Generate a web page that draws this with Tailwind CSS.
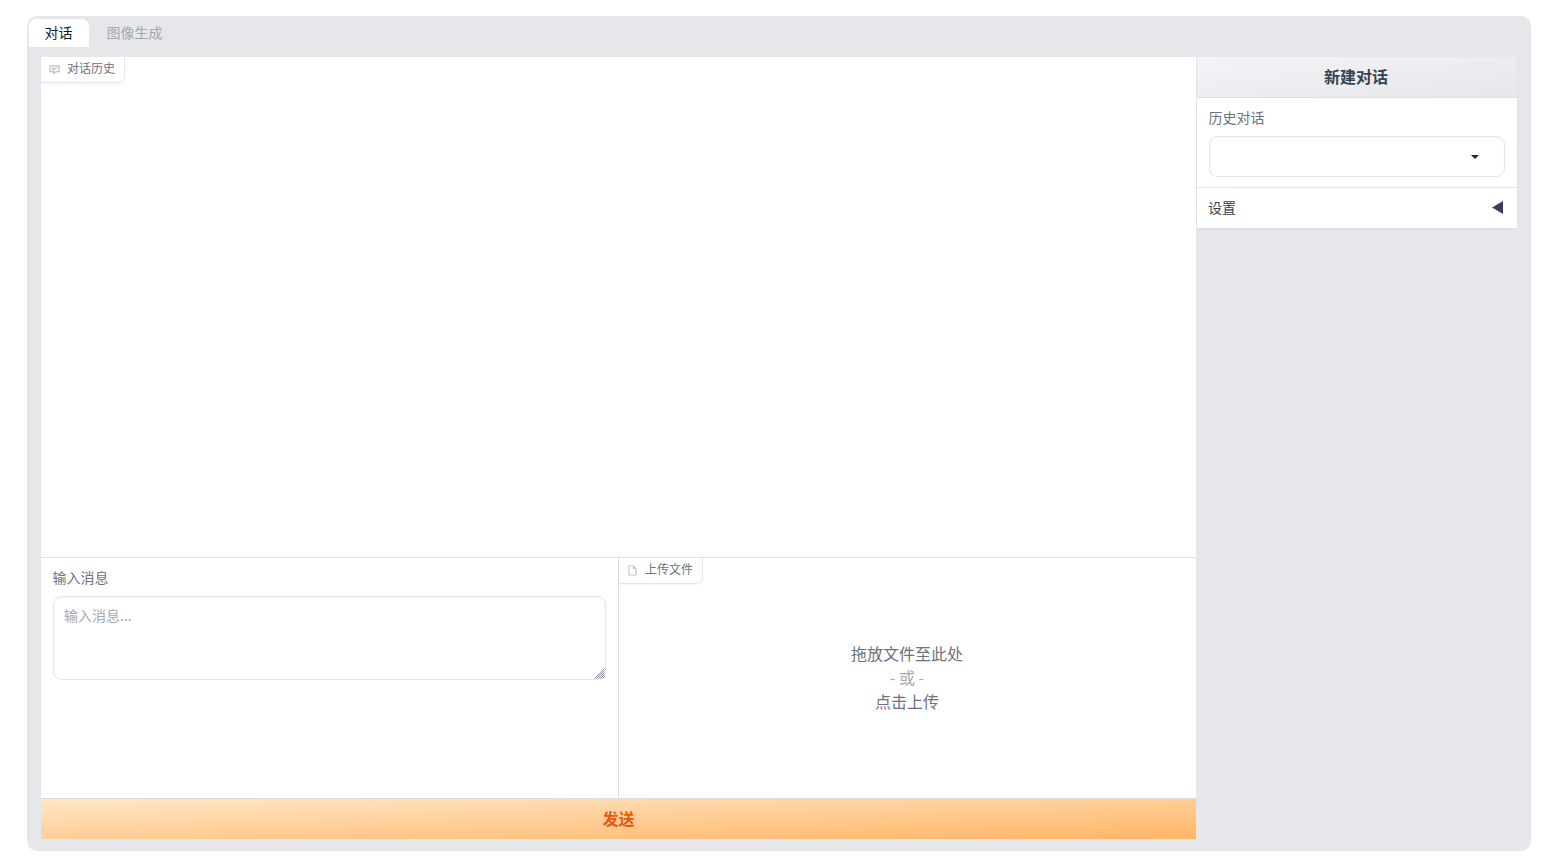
<!DOCTYPE html>
<html lang="zh-CN">

<head>
    <meta charset="UTF-8">
    <meta name="viewport" content="width=device-width, initial-scale=1.0">
    <title>对话</title>
    <script src="https://cdn.jsdelivr.net/npm/@tailwindcss/browser@4"></script>
</head>

<body class="bg-white font-['Noto_Sans_CJK_SC','Noto_Sans',sans-serif] text-[#374151]">
    <div class="pt-4 pl-[27px]">
        <div class="flex h-[835px] w-[1504px] flex-col rounded-[10px] bg-[#e5e7eb]">
            <!-- Tabs -->
            <div class="flex h-[41px] items-start pl-[2px] pt-[3px] text-sm">
                <button class="h-7 w-[60px] rounded-t-[7px] bg-white pr-[1px] pb-[2px] text-[#111827]">对话</button>
                <button class="h-7 w-[92px] pr-[1px] pb-[2px] text-[#a3a8b1]">图像生成</button>
            </div>

            <div class="flex pl-[14px]">
                <!-- Main column -->
                <div class="flex w-[1155px] flex-col">
                    <div class="h-[500px] bg-white">
                        <div class="flex h-[26px] w-[84px] items-center rounded-br-[7px] border-r border-b border-[#e5e7eb] pb-[3px] pl-2 text-xs text-[#6b7280] shadow-[0_1px_2px_rgba(0,0,0,0.05)]">
                            <svg class="mr-[7px] mt-[3px] h-[11px] w-[11px] text-[#a3a8b1]" viewBox="0 0 24 24" fill="none" stroke="currentColor" stroke-width="2" stroke-linejoin="round">
                                <path d="M2 4h20v13h-8l-3 4v-4H2z" />
                                <path d="M6 9h12M6 13h8" />
                            </svg>
                            对话历史
                        </div>
                    </div>

                    <div class="flex h-[241px] border-t border-[#e0e0e0] bg-white">
                        <!-- Message input -->
                        <div class="w-[578px] border-r border-[#e0e0e0] px-3 pt-2">
                            <label class="-ml-[0.5px] block text-sm leading-[22px] text-[#6b7280]">输入消息</label>
                            <div class="relative mt-2 h-[84px] w-[553px] rounded-lg border border-[#e5e7eb] px-[10px] py-[7px] text-sm leading-[22px] text-[#a3a8b1] shadow-[inset_0_1px_2px_rgba(0,0,0,0.05)]">
                                输入消息...
                                <svg class="absolute right-0 bottom-0 h-[11px] w-[11px] text-[#6b7280]" viewBox="0 0 11 11" fill="none" stroke="currentColor" stroke-width="0.8">
                                    <path d="M10.5 0.5L0.5 10.5M10.5 2.5L2.5 10.5M10.5 4.5L4.5 10.5M10.5 6.5L6.5 10.5M10.5 8.5L8.5 10.5" />
                                </svg>
                            </div>
                        </div>

                        <!-- File upload -->
                        <div class="relative flex-1">
                            <div class="absolute top-0 left-0 flex h-[26px] w-[84px] items-center rounded-br-[7px] border-r border-b border-[#e5e7eb] pb-[3px] pl-[9px] text-xs text-[#6b7280] shadow-[0_1px_2px_rgba(0,0,0,0.05)]">
                                <svg class="mr-[8px] mt-[3px] h-[11px] w-[9px] text-[#c4c7cd]" viewBox="0 0 9 11" fill="none" stroke="currentColor" stroke-width="1.2" stroke-linejoin="round">
                                    <path d="M1 1h4.5L8 3.5V10H1z" />
                                    <path d="M5.5 1v2.5H8" />
                                </svg>
                                上传文件
                            </div>
                            <div class="flex h-full flex-col items-center pt-[83px] pr-[1px] text-base leading-6 text-[#6b7280]">
                                <span>拖放文件至此处</span>
                                <span class="text-[#a3a8b1]">- 或 -</span>
                                <span>点击上传</span>
                            </div>
                        </div>
                    </div>

                    <button class="h-[41px] border-t border-[#d9dce3] bg-[linear-gradient(to_bottom_right,#ffe7c7,#ffb566)] pb-[2px] text-base font-bold text-[#ea580c]">发送</button>
                </div>

                <!-- Sidebar -->
                <div class="ml-px w-[320px] self-start bg-white shadow-[0_1px_2px_rgba(0,0,0,0.05)]">
                    <button class="h-[41px] w-full border-b border-[#e0e0e0] bg-[linear-gradient(to_bottom_right,#f3f4f6,#e5e7eb)] pr-[2px] pb-[2px] text-base font-bold text-[#374151]">新建对话</button>
                    <div class="h-[90px] border-b border-[#e0e0e0] px-3 pt-2">
                        <label class="-ml-[0.5px] block text-sm leading-[22px] text-[#6b7280]">历史对话</label>
                        <div class="relative mt-2 h-[41px] w-[296px] rounded-lg border border-[#e5e7eb] shadow-[inset_0_1px_2px_rgba(0,0,0,0.05)]">
                            <svg class="absolute top-[18px] right-[25px] h-[4px] w-[8px] text-[#1f2937]" viewBox="0 0 8 4" fill="currentColor">
                                <path d="M0 0h8L4 4z" />
                            </svg>
                        </div>
                    </div>
                    <div class="flex h-10 items-center justify-between pr-[14px] pl-3">
                        <span class="-ml-px pb-[2px] text-sm text-[#374151]">设置</span>
                        <svg class="mb-[1px] h-[13px] w-[11px] text-[#374151]" viewBox="0 0 11 13" fill="currentColor">
                            <path d="M11 0v13L0 6.5z" />
                        </svg>
                    </div>
                </div>
            </div>
        </div>
    </div>
</body>

</html>
